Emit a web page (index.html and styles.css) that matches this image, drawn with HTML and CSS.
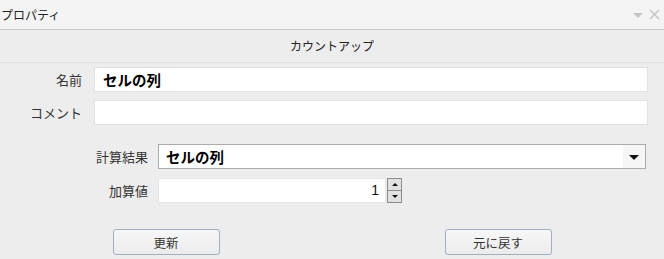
FILE: index.html
```html
<!DOCTYPE html>
<html>

<head>
    <title>プロパティ</title>
    <link rel="stylesheet" href="styles.css">
</head>

<body>
    <div class="panel">
        <div class="titlebar">
            <span class="title">プロパティ</span>
            <div class="title-tools">
                <span class="tool-menu"></span>
                <svg class="tool-close" width="11" height="11" viewBox="0 0 11 11">
                    <path d="M1 1 L10 10 M10 1 L1 10" stroke="#c4c4c4" stroke-width="1.4" fill="none" />
                </svg>
            </div>
        </div>

        <div class="header">カウントアップ</div>

        <div class="form-top">
            <label class="label">名前</label>
            <div class="field"><span class="value">セルの列</span></div>
            <label class="label">コメント</label>
            <div class="field"></div>
        </div>

        <div class="form-bottom">
            <label class="label">計算結果</label>
            <div class="select">
                <span class="value">セルの列</span>
                <span class="select-arrow"></span>
            </div>
            <label class="label">加算値</label>
            <div class="spinner">
                <div class="spin-field">1</div>
                <div class="spin-buttons">
                    <span class="spin-up"></span>
                    <span class="spin-down"></span>
                </div>
            </div>
        </div>

        <div class="actions">
            <button class="btn">更新</button>
            <button class="btn">元に戻す</button>
        </div>
    </div>
</body>

</html>
```

FILE: styles.css
```css
/* Panel */
body {
    margin: 0;
    background-color: #ededed;
    font-family: "Noto Sans CJK JP", "Noto Sans", sans-serif;
    color: #333;
}

.panel {
    width: 664px;
    height: 259px;
    overflow: hidden;
}

.titlebar {
    height: 29px;
    background-color: #f4f4f4;
    border-bottom: 1px solid #c9c9c9;
    display: flex;
    justify-content: space-between;
    align-items: center;
    padding: 0 4px 0 1px;
}

.title {
    font-size: 12px;
    color: #222;
}

.title-tools {
    display: flex;
    align-items: center;
    gap: 6px;
}

.tool-menu {
    width: 0;
    height: 0;
    border-left: 5px solid transparent;
    border-right: 5px solid transparent;
    border-top: 5px solid #c4c4c4;
    margin-top: 2px;
}

.header {
    height: 32px;
    line-height: 32px;
    text-align: center;
    font-size: 12px;
    color: #222;
    border-bottom: 1px solid #e0e0e0;
}

/* Forms */
.label {
    font-size: 13px;
    text-align: right;
    color: #333;
}

.value {
    font-size: 14.5px;
    font-weight: bold;
    color: #000;
}

.form-top {
    display: grid;
    grid-template-columns: 82px 1fr;
    column-gap: 12px;
    row-gap: 8px;
    align-items: center;
    padding: 4px 16px 0 0;
}

.field {
    height: 23px;
    background-color: #fff;
    border: 1px solid #e2e2e2;
    display: flex;
    align-items: center;
    padding-left: 8px;
}

.form-bottom {
    display: grid;
    grid-template-columns: 148px 1fr;
    column-gap: 10px;
    row-gap: 9px;
    align-items: center;
    padding: 19px 18px 0 0;
}

.select {
    height: 23px;
    background-color: #fff;
    border: 1px solid #ababab;
    display: flex;
    align-items: center;
    justify-content: space-between;
    padding-left: 7px;
}

.select-arrow {
    width: 22px;
    height: 23px;
    background-color: #f6f6f6;
    position: relative;
}

.select-arrow::after {
    content: "";
    position: absolute;
    left: 6px;
    top: 10px;
    border-left: 5px solid transparent;
    border-right: 5px solid transparent;
    border-top: 5px solid #111;
}

.spinner {
    display: flex;
    gap: 1px;
    width: 244px;
}

.spin-field {
    width: 220px;
    height: 23px;
    background-color: #fff;
    border: 1px solid #e6e6e6;
    text-align: right;
    padding-right: 6px;
    font-size: 14px;
    line-height: 23px;
    color: #111;
    font-family: "Liberation Sans", sans-serif;
}

.spin-buttons {
    display: flex;
    flex-direction: column;
    width: 15px;
    height: 25px;
    border: 1px solid #8c8c8c;
    box-sizing: border-box;
    background-color: #e1e1e1;
}

.spin-up,
.spin-down {
    flex: 1;
    position: relative;
}

.spin-up {
    border-bottom: 1px solid #8c8c8c;
}

.spin-up::after,
.spin-down::after {
    content: "";
    position: absolute;
    left: 4px;
    top: 4px;
    border-left: 3px solid transparent;
    border-right: 3px solid transparent;
}

.spin-up::after {
    border-bottom: 3px solid #111;
}

.spin-down::after {
    border-top: 3px solid #111;
}

/* Buttons */
.actions {
    display: flex;
    justify-content: space-around;
    padding-top: 26px;
}

.btn {
    width: 107px;
    height: 26px;
    border: 1px solid #9fb0c4;
    border-radius: 3px;
    background: linear-gradient(#f7f7f7, #ececec);
    font-family: "Noto Sans CJK JP", sans-serif;
    font-size: 12.5px;
    color: #333;
    padding: 0;
}
```
